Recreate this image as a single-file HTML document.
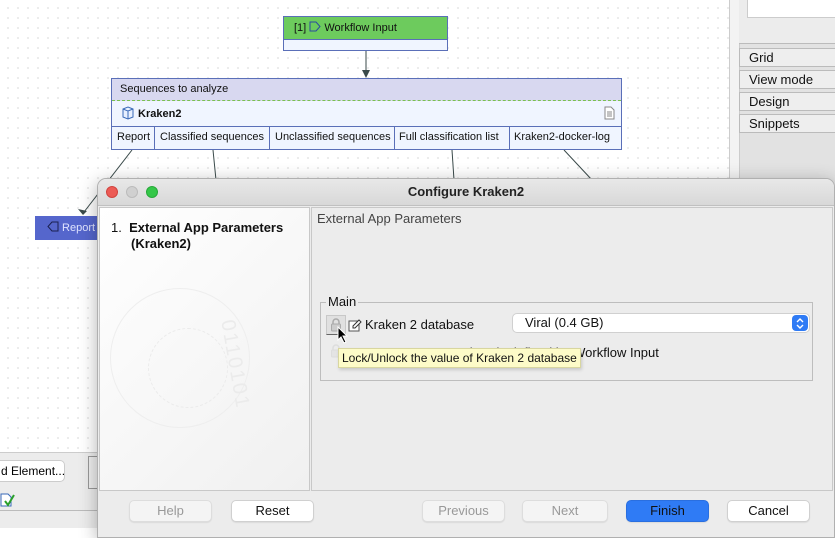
<!DOCTYPE html>
<html><head><meta charset="utf-8"><style>
*{box-sizing:border-box;margin:0;padding:0}
body{width:835px;height:528px;overflow:hidden;position:relative;font-family:"Liberation Sans",sans-serif;background:#fff}
.canvas{position:absolute;left:0;top:0;width:729px;height:455px;background-color:#fff;background-image:radial-gradient(circle,#b8b8b8 0.6px,transparent 0.8px);background-size:10px 10px;background-position:3px 3px}
.abs{position:absolute}
.node{position:absolute;font-size:11px;color:#111;white-space:nowrap}
.tab{position:absolute;left:739px;width:100px;height:19px;background:#eee;border:1px solid #bbb;border-right:none;font-size:13px;padding-left:9px;line-height:17px;color:#111}
.btn{position:absolute;top:500px;height:22px;border-radius:5px;background:#fff;border:1px solid #d0d0d0;font-size:13px;text-align:center;line-height:20px;color:#111;box-shadow:0 1px 1px rgba(0,0,0,.08)}
.dis{background:#f4f4f4;color:#999;border-color:#ddd}
</style></head><body>
<div class="canvas"></div>
<div class="abs" style="left:729px;top:0;width:10px;height:528px;background:#f3f3f3;border-left:1px solid #ccc"></div>
<div class="abs" style="left:739px;top:0;width:96px;height:528px;background:#e2e2e2;border-left:1px solid #ccc"></div>
<div class="abs" style="left:739px;top:0;width:96px;height:44px;background:#ececec;border-bottom:1px solid #bbb"></div>
<div class="abs" style="left:747px;top:0;width:88px;height:18px;background:#fff;border:1px solid #ccc;border-top:none;border-right:none"></div>
<div class="tab" style="top:48px">Grid</div>
<div class="tab" style="top:70px">View mode</div>
<div class="tab" style="top:92px">Design</div>
<div class="tab" style="top:114px">Snippets</div>
<svg class="abs" style="left:0;top:0" width="729" height="260">
<g stroke="#3a4a4a" stroke-width="1" fill="none">
<line x1="366" y1="50" x2="366" y2="76"/>
<line x1="132" y1="150" x2="84" y2="212"/>
<line x1="213" y1="150" x2="216" y2="180"/>
<line x1="452" y1="150" x2="454" y2="180"/>
<line x1="564" y1="150" x2="592" y2="180"/>
</g>
<path d="M362 70 L366 78 L370 70 Z" fill="#3a4a4a"/>
<path d="M78 209 L83 215 L87 211 Z" fill="#3a4a4a"/>
</svg>
<div class="node" style="left:283px;top:16px;width:165px;height:35px;border:1px solid #5a6fb8;background:#f0f5ff">
 <div style="height:23px;background:#6dcb5d;border-bottom:1px solid #5a6fb8;padding:4px 0 0 10px">[1] <svg width="12" height="11" style="vertical-align:-1px"><path d="M1 1 H7 L11 5.5 L7 10 H1 Z" fill="none" stroke="#2a4aa0"/></svg> Workflow Input</div>
</div>
<div class="node" style="left:111px;top:78px;width:511px;height:72px;border:1px solid #5a6fb8;background:#f0f5ff">
 <div style="height:22px;background:#d8d8f0;border-bottom:1px dashed #7ac050;padding:4px 0 0 8px">Sequences to analyze</div>
 <div style="height:26px;padding:5px 0 0 9px;font-weight:bold;border-bottom:1px solid #5a6fb8;position:relative"><svg width="14" height="14" style="vertical-align:-3px"><path d="M2 3 L7 1 L12 3 V11 L7 13 L2 11 Z M2 3 L7 5 L12 3 M7 5 V13" fill="#e8f0ff" stroke="#3a6ab8"/></svg> Kraken2
 <svg class="abs" style="right:6px;top:5px" width="11" height="14"><path d="M1 1 H7 L10 4 V13 H1 Z" fill="#fff" stroke="#888"/><path d="M3 6H8M3 8H8M3 10H8" stroke="#888"/></svg></div>
 <div style="display:flex;height:22px;line-height:20px">
  <div style="width:43px;padding-left:5px;border-right:1px solid #5a6fb8">Report</div>
  <div style="width:115px;padding-left:5px;border-right:1px solid #5a6fb8">Classified sequences</div>
  <div style="width:125px;padding-left:5px;border-right:1px solid #5a6fb8">Unclassified sequences</div>
  <div style="width:115px;padding-left:4px;border-right:1px solid #5a6fb8">Full classification list</div>
  <div style="flex:1;padding-left:4px">Kraken2-docker-log</div>
 </div>
</div>
<div class="node" style="left:35px;top:216px;width:70px;height:24px;background:#5566cc;color:#e0e4ff;padding:5px 0 0 12px"><svg width="12" height="11" style="vertical-align:-1px"><path d="M11 1 H5 L1 5.5 L5 10 H11 Z" fill="none" stroke="#1a2050"/></svg> Report</div>
<div class="abs" style="left:0;top:452px;width:97px;height:76px;background:#ececec;border-top:1px solid #ccc"></div>
<div class="abs" style="left:-10px;top:460px;width:75px;height:22px;background:#fff;border:1px solid #ccc;border-radius:5px;font-size:12px;line-height:20px;padding-left:10px;white-space:nowrap;overflow:hidden">d Element...</div>
<div class="abs" style="left:88px;top:456px;width:12px;height:33px;border:1px solid #999;background:#eee"></div>
<svg class="abs" style="left:0;top:492px" width="16" height="16"><path d="M1 2 H8 L11 5 V14 H1 Z" fill="#fff" stroke="#3a6ab8"/><path d="M5 9 L8 13 L14 3" fill="none" stroke="#2aa02a" stroke-width="2"/></svg>
<div class="abs" style="left:0;top:510px;width:97px;height:1px;background:#bbb"></div>
<div class="abs" style="left:97px;top:178px;width:738px;height:360px;background:#ececec;border:1px solid #b0b0b0;border-radius:9px 9px 0 0;box-shadow:0 4px 18px rgba(0,0,0,.3);overflow:hidden">
 <div style="height:27px;background:linear-gradient(#e8e8e8,#d8d8d8);border-bottom:1px solid #c0c0c0;text-align:center;font-weight:bold;font-size:13px;line-height:26px;color:#222;position:relative">Configure Kraken2
  <span class="abs" style="left:8px;top:7px;width:12px;height:12px;border-radius:50%;background:#ec5b55;border:1px solid #d0443f"></span>
  <span class="abs" style="left:28px;top:7px;width:12px;height:12px;border-radius:50%;background:#d0d0d0;border:1px solid #bbb"></span>
  <span class="abs" style="left:48px;top:7px;width:12px;height:12px;border-radius:50%;background:#34c748;border:1px solid #28a83a"></span>
 </div>
 <div class="abs" style="left:1px;top:28px;width:211px;height:284px;background:linear-gradient(135deg,#fff,#f0f0f0);border:1px solid #c8c8c8;overflow:hidden">
  <div style="font-size:13px;font-weight:bold;padding:12px 0 0 11px;line-height:16px;color:#111"><span style="font-weight:normal">1.</span>&nbsp; External App Parameters<br><span style="padding-left:20px">(Kraken2)</span></div>
  <div class="abs" style="left:10px;top:80px;width:140px;height:140px;border-radius:50%;border:1px solid #eeeeee"></div>
  <div class="abs" style="left:48px;top:120px;width:80px;height:80px;border-radius:50%;border:1px dashed #ebebeb"></div>
  <div class="abs" style="left:138px;top:110px;font-size:20px;color:#ebebeb;transform:rotate(80deg);transform-origin:left top;letter-spacing:2px">0110101</div>
 </div>
 <div class="abs" style="left:213px;top:28px;width:522px;height:284px;background:#ececec;border:1px solid #c8c8c8">
  <div style="font-size:13px;color:#444;padding:3px 0 0 5px">External App Parameters</div>
  <div class="abs" style="left:8px;top:94px;width:493px;height:79px;border:1px solid #bdbdbd"></div>
  <div class="abs" style="left:14px;top:86px;font-size:13px;background:#ececec;padding:0 2px;color:#111">Main</div>
  <div class="abs" style="left:14px;top:107px;width:20px;height:20px;border:1px solid #c8c8c8;background:#e0e0e0;border-bottom-color:#666"></div>
  <svg class="abs" style="left:18px;top:110px" width="12" height="14"><path d="M3 6 V4 A3 3 0 0 1 9 4 V6" fill="none" stroke="#aaa" stroke-width="1.5"/><rect x="1.5" y="6" width="9" height="7" rx="1" fill="#ccc" stroke="#aaa"/></svg>
  <svg class="abs" style="left:36px;top:110px" width="14" height="14"><rect x="1" y="3" width="10" height="10" fill="#fff" stroke="#555"/><path d="M5 10 L5 8 L11 2 L13 4 L7 10 Z" fill="#fff" stroke="#333"/></svg>
  <div class="abs" style="left:53px;top:109px;font-size:13px;color:#111">Kraken 2 database</div>
  <div class="abs" style="left:200px;top:105px;width:298px;height:20px;background:#fff;border:1px solid #d0d0d0;border-radius:5px;font-size:13px;line-height:18px;padding-left:12px;color:#111">Viral (0.4 GB)
   <span class="abs" style="right:1px;top:1px;width:16px;height:16px;background:#2f7bf5;border-radius:4px"></span>
   <svg class="abs" style="right:5px;top:4px" width="8" height="11"><path d="M1 4 L4 1 L7 4 M1 7 L4 10 L7 7" fill="none" stroke="#fff" stroke-width="1.4"/></svg>
  </div>
  <svg class="abs" style="left:18px;top:136px" width="12" height="14"><path d="M3 6 V4 A3 3 0 0 1 9 4 V6" fill="none" stroke="#ddd" stroke-width="1.5"/><rect x="1.5" y="6" width="9" height="7" rx="1" fill="#e4e4e4" stroke="#ddd"/></svg>
  <div class="abs" style="left:53px;top:137px;font-size:13px;color:#111;white-space:nowrap">Sequences to analyze is defined by Workflow Input</div>
  <div class="abs" style="left:26px;top:140px;height:20px;background:#fdfbc8;border:1px solid #d8d6a0;font-size:12px;line-height:18px;padding:0 3px;color:#111;box-shadow:1px 2px 3px rgba(0,0,0,.15);white-space:nowrap">Lock/Unlock the value of Kraken 2 database</div>
  <svg class="abs" style="left:25px;top:118px" width="12" height="18"><path d="M1 1 L1 14 L4 11 L7 17 L9 16 L6 10 L10 10 Z" fill="#000" stroke="#fff" stroke-width="1"/></svg>
 </div>
</div>
<div class="btn dis" style="left:129px;width:83px">Help</div>
<div class="btn" style="left:231px;width:83px">Reset</div>
<div class="btn dis" style="left:422px;width:83px">Previous</div>
<div class="btn dis" style="left:522px;width:86px">Next</div>
<div class="btn" style="left:626px;width:83px;background:#2f7bf5;border-color:#2a6fe0;color:#111">Finish</div>
<div class="btn" style="left:727px;width:83px">Cancel</div>
</body></html>
